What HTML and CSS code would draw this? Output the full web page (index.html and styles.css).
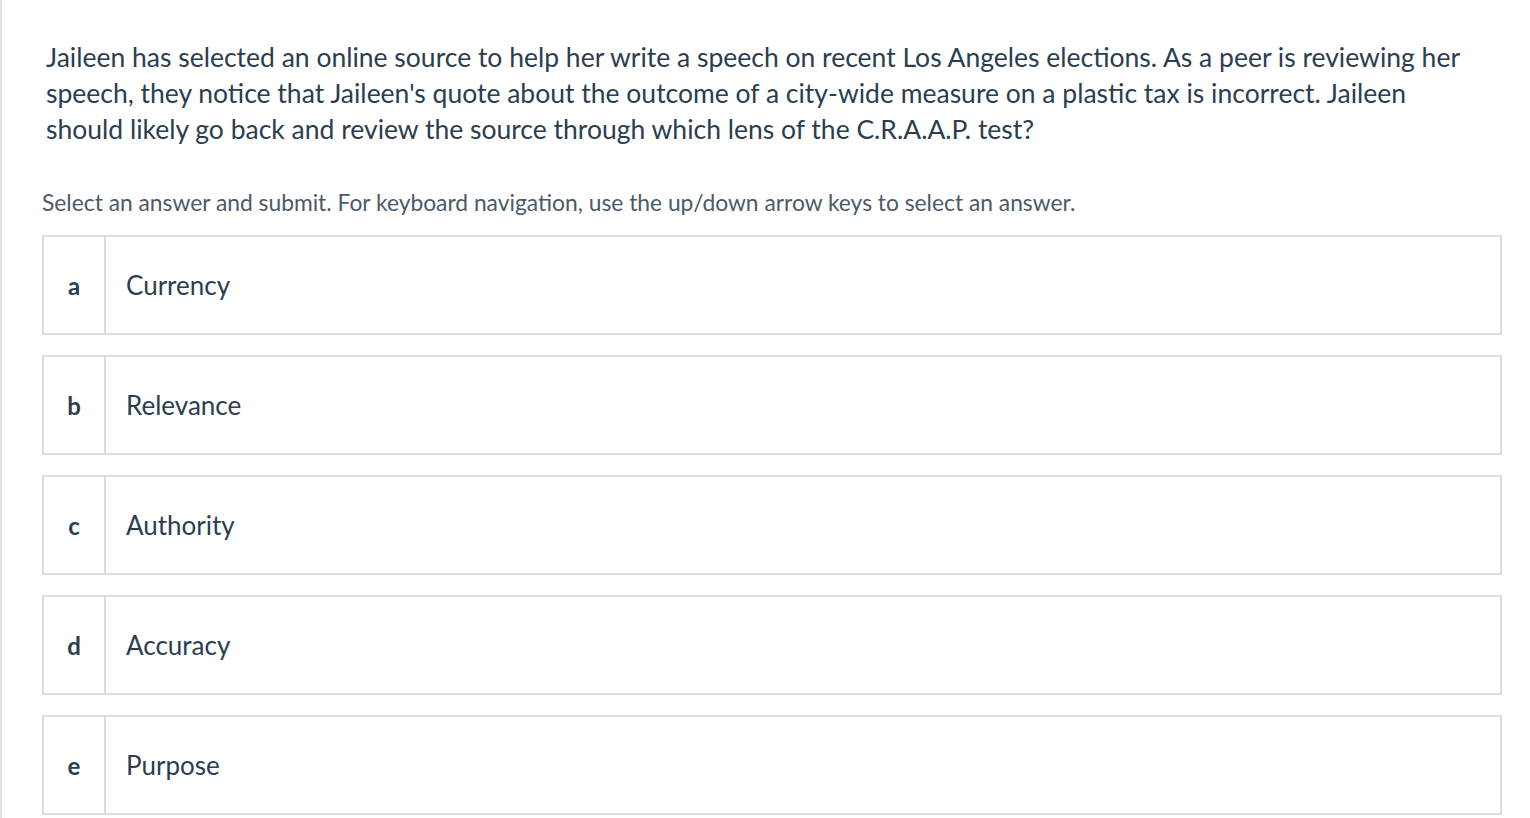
FILE: index.html
```html
<!DOCTYPE html>
<html>
<head>
<meta charset="utf-8">
<link rel="stylesheet" href="styles.css">
</head>
<body>
<div class="page">
  <p class="question">Jaileen has selected an online source to help her write a speech on recent Los Angeles elections. As a peer is reviewing her speech, they notice that Jaileen's quote about the outcome of a city-wide measure on a plastic tax is incorrect. Jaileen should likely go back and review the source through which lens of the C.R.A.A.P. test?</p>
  <p class="instructions">Select an answer and submit. For keyboard navigation, use the up/down arrow keys to select an answer.</p>
  <ul class="options">
    <li class="option"><span class="letter">a</span><span class="label">Currency</span></li>
    <li class="option"><span class="letter">b</span><span class="label">Relevance</span></li>
    <li class="option"><span class="letter">c</span><span class="label">Authority</span></li>
    <li class="option"><span class="letter">d</span><span class="label">Accuracy</span></li>
    <li class="option"><span class="letter">e</span><span class="label">Purpose</span></li>
  </ul>
</div>
</body>
</html>
```
FILE: styles.css
```css
html, body {
  margin: 0;
  padding: 0;
  background: #ffffff;
}
.page {
  border-left: 2px solid #e1e3e5;
  padding: 39px 28px 0 40px;
  min-height: 818px;
  box-sizing: border-box;
  font-family: Lato, "Liberation Sans", sans-serif;
}
.question {
  margin: 0 0 40px 4px;
  max-width: 1425px;
  font-size: 26.5px;
  line-height: 36px;
  color: #2b3e50;
}
.instructions {
  margin: 0 0 18px 0;
  font-size: 22.8px;
  line-height: 30px;
  color: #4b5a68;
}
.options {
  list-style: none;
  margin: 0;
  padding: 0;
  display: flex;
  flex-direction: column;
  gap: 20px;
}
.option {
  display: flex;
  height: 100px;
  box-sizing: border-box;
  border: 2px solid #d9dde0;
}
.letter {
  width: 60px;
  flex: none;
  border-right: 2px solid #d9dde0;
  display: flex;
  align-items: center;
  justify-content: center;
  font-weight: 700;
  font-size: 24px;
  color: #2b3e50;
}
.label {
  display: flex;
  align-items: center;
  padding-left: 20px;
  font-size: 26px;
  color: #2b3e50;
}
```
